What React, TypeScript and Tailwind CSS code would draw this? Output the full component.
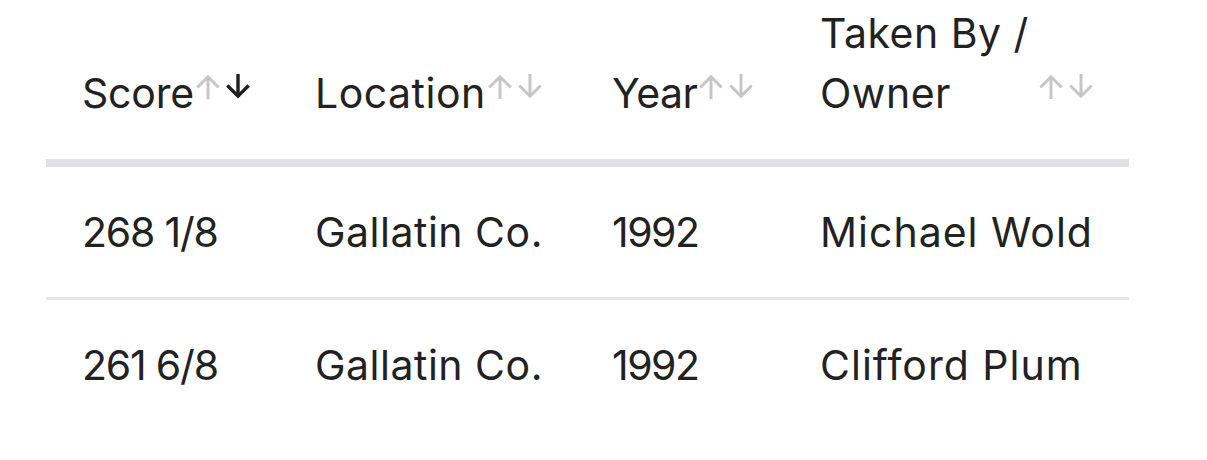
type Dir = 'up' | 'down';

function Arrow({ dir, active }: { dir: Dir; active?: boolean }) {
  const color = active ? '#1f1f1f' : '#c6c6c6';
  const sw = active ? 3.4 : 3;
  return (
    <svg width="24" height="25" viewBox="0 0 24 25" fill="none" className="block">
      {dir === 'up' ? (
        <g stroke={color} strokeWidth={sw} strokeLinecap="butt" strokeLinejoin="miter">
          <path d="M12 3.5V25" />
          <path d="M1.3 13.5L12 2.8L22.7 13.5" />
        </g>
      ) : (
        <g stroke={color} strokeWidth={sw} strokeLinecap="butt" strokeLinejoin="miter">
          <path d="M12 0V21.5" />
          <path d="M1.3 11.5L12 22.2L22.7 11.5" />
        </g>
      )}
    </svg>
  );
}

function SortArrows({ active }: { active?: boolean }) {
  return (
    <div className="flex h-[60px] shrink-0 items-start gap-[6px] pt-[11px] pl-[2px]">
      <Arrow dir="up" />
      <Arrow dir="down" active={active} />
    </div>
  );
}

const rows = [
  { score: '268 1/8', location: 'Gallatin Co.', year: '1992', owner: 'Michael Wold' },
  { score: '261 6/8', location: 'Gallatin Co.', year: '1992', owner: 'Clifford Plum' },
];

export default function App() {
  return (
    <div
      className="h-[460px] w-[1207px] overflow-hidden bg-white pl-[46px] text-[#222] antialiased"
      style={{ fontFamily: 'Inter, "DejaVu Sans", sans-serif' }}
    >
      <table className="w-[1083px] table-fixed border-collapse text-[41px] leading-[60px] tracking-[0.5px]">
        <colgroup>
          <col className="w-[233px]" />
          <col className="w-[297px]" />
          <col className="w-[208px]" />
          <col className="w-[345px]" />
        </colgroup>
        <thead>
          <tr className="border-b-[8px] border-[#e0e1e5]">
            <th className="px-[36px] pt-[3px] pb-[36px] text-left align-bottom font-normal">
              <div className="flex items-end">
                <span className="tracking-[-0.2px]">Score</span>
                <SortArrows active />
              </div>
            </th>
            <th className="px-[36px] pt-[3px] pb-[36px] text-left align-bottom font-normal">
              <div className="flex items-end">
                <span>Location</span>
                <SortArrows />
              </div>
            </th>
            <th className="px-[36px] pt-[3px] pb-[36px] text-left align-bottom font-normal">
              <div className="flex items-end">
                <span className="tracking-[-0.5px]">Year</span>
                <SortArrows />
              </div>
            </th>
            <th className="px-[36px] pt-[3px] pb-[36px] text-left align-bottom font-normal">
              <div className="flex items-end justify-between">
                <span className="min-w-0">Taken By / Owner</span>
                <SortArrows />
              </div>
            </th>
          </tr>
        </thead>
        <tbody>
          {rows.map((r, i) => (
            <tr key={i} className={i < rows.length - 1 ? 'border-b-[3px] border-[#e4e6e9]' : ''}>
              <td className="px-[36px] py-[35px] whitespace-nowrap tracking-[-1.2px]">{r.score}</td>
              <td className="px-[36px] py-[35px] whitespace-nowrap">{r.location}</td>
              <td className="px-[36px] py-[35px] whitespace-nowrap tracking-[-1.5px]">{r.year}</td>
              <td className="px-[36px] py-[35px] whitespace-nowrap tracking-[1px]">{r.owner}</td>
            </tr>
          ))}
        </tbody>
      </table>
    </div>
  );
}
